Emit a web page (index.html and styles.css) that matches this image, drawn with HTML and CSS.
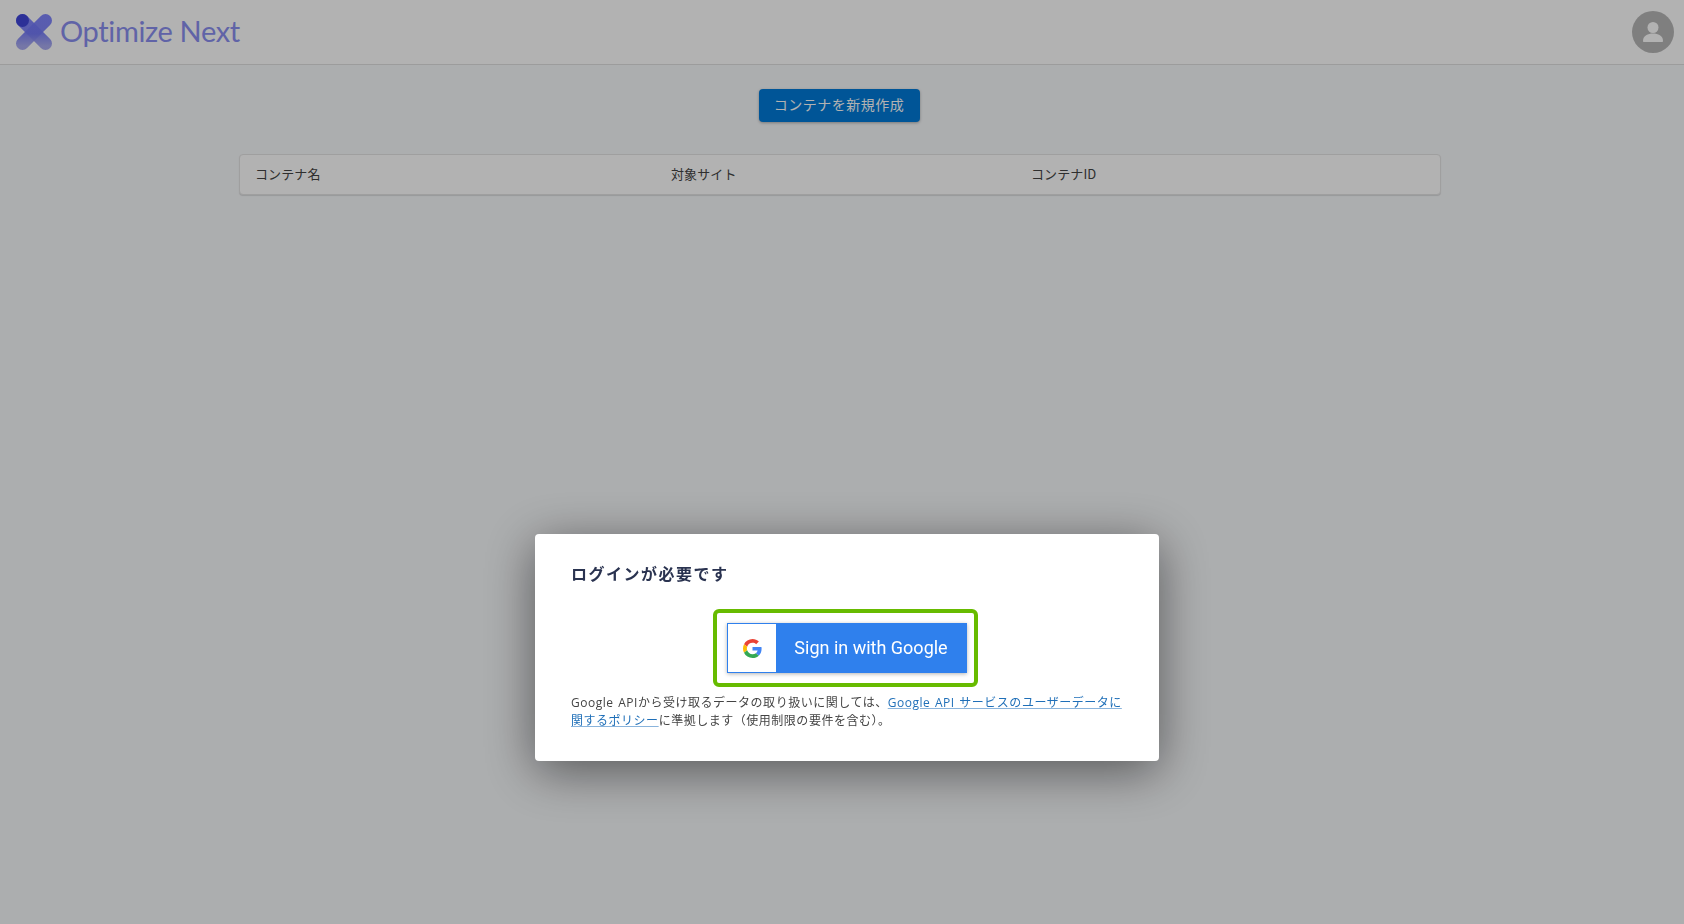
FILE: index.html
```html
<!DOCTYPE html>
<html lang="ja">
<head>
<meta charset="UTF-8">
<meta name="viewport" content="width=device-width, initial-scale=1.0">
<title>Optimize Next</title>
<link rel="stylesheet" href="styles.css">
</head>
<body>

<header class="header">
  <div class="brand">
    <svg class="brand-mark" width="40" height="40" viewBox="0 0 40 40">
      <defs>
        <linearGradient id="markFade" gradientUnits="userSpaceOnUse" x1="0" y1="10" x2="0" y2="34">
          <stop offset="0" stop-color="#7278fb"/>
          <stop offset="0.5" stop-color="#7278f5"/>
          <stop offset="1" stop-color="#9fa1ee"/>
        </linearGradient>
      </defs>
      <path class="mark-stroke" d="M8.5 8.5 L31.5 31.5"/>
      <path class="mark-stroke" d="M31.5 8.5 L8.5 31.5"/>
      <circle class="mark-dot" cx="8.5" cy="8.5" r="6.5"/>
    </svg>
    <span class="brand-name">Optimize Next</span>
  </div>
  <div class="avatar">
    <svg width="42" height="42" viewBox="0 0 42 42">
      <circle cx="21" cy="16.5" r="5.5" fill="#fff"/>
      <path d="M11 30 C11 24.5 16 22.6 21 22.6 C26 22.6 31 24.5 31 30 C31 30.6 30.6 31 30 31 H12 C11.4 31 11 30.6 11 30 Z" fill="#fff"/>
    </svg>
  </div>
</header>

<main class="main">
  <button class="create-btn" type="button">コンテナを新規作成</button>
  <div class="table-card">
    <span class="col col-name">コンテナ名</span>
    <span class="col col-site">対象サイト</span>
    <span class="col col-id">コンテナID</span>
  </div>
</main>

<div class="overlay">
  <div class="modal">
    <h2 class="modal-title">ログインが必要です</h2>
    <div class="signin-frame">
      <a class="google-btn" href="#">
        <span class="google-icon">
          <svg width="19" height="19" viewBox="0 0 48 48">
            <path fill="#EA4335" d="M24 9.5c3.54 0 6.71 1.22 9.21 3.6l6.85-6.85C35.9 2.38 30.47 0 24 0 14.62 0 6.51 5.38 2.56 13.22l7.98 6.19C12.43 13.72 17.74 9.5 24 9.5z"/>
            <path fill="#4285F4" d="M46.98 24.55c0-1.57-.15-3.09-.38-4.55H24v9.02h12.94c-.58 2.96-2.26 5.48-4.78 7.18l7.73 6c4.51-4.18 7.09-10.36 7.09-17.65z"/>
            <path fill="#FBBC05" d="M10.53 28.59c-.48-1.45-.76-2.99-.76-4.59s.27-3.14.76-4.59l-7.98-6.19C.92 16.46 0 20.12 0 24c0 3.88.92 7.54 2.56 10.78l7.97-6.19z"/>
            <path fill="#34A853" d="M24 48c6.48 0 11.93-2.13 15.89-5.81l-7.73-6c-2.15 1.45-4.92 2.3-8.16 2.3-6.26 0-11.57-4.22-13.47-9.91l-7.98 6.19C6.51 42.62 14.62 48 24 48z"/>
          </svg>
        </span>
        <span class="google-label">Sign in with Google</span>
      </a>
    </div>
    <p class="modal-note">Google APIから受け取るデータの取り扱いに関しては、<a href="#">Google API サービスのユーザーデータに関するポリシー</a>に準拠します（使用制限の要件を含む）。</p>
  </div>
</div>

</body>
</html>
```

FILE: styles.css
```css
* {
  box-sizing: border-box;
}
html, body {
  height: 100%;
}
body {
  margin: 0;
  background-color: #f7f9fb;
  font-family: "Noto Sans CJK JP", "Noto Sans", sans-serif;
  color: #333;
  overflow: hidden;
}
.header {
  display: flex;
  align-items: center;
  justify-content: space-between;
  height: 65px;
  padding: 0 10px 1px 14px;
  background-color: #fff;
  border-bottom: 1px solid #e0e0e0;
}
.brand {
  display: flex;
  align-items: center;
  gap: 6px;
}
.brand-mark {
  flex: none;
}
.mark-stroke {
  fill: none;
  stroke: url(#markFade);
  stroke-opacity: 0.9;
  stroke-width: 13;
  stroke-linecap: round;
}
.mark-dot {
  fill: #3f46d8;
}
.brand-name {
  margin-top: -3px;
  font-family: Lato, sans-serif;
  font-weight: 400;
  font-size: 29px;
  letter-spacing: -0.35px;
  color: #8a8ff0;
}
.avatar {
  display: flex;
  width: 42px;
  height: 42px;
  border-radius: 50%;
  background-color: #b7b7b7;
}
.main {
  display: flex;
  flex-direction: column;
  align-items: center;
  width: 1678px;
  padding-top: 24px;
}
.create-btn {
  height: 33px;
  width: 161px;
  padding: 0 0 4px;
  border: none;
  border-radius: 4px;
  background-color: #007ad8;
  color: #fff;
  font-family: inherit;
  font-size: 14px;
  letter-spacing: 0.5px;
  box-shadow: 0 1px 3px rgba(0, 0, 0, 0.3);
}
.table-card {
  display: grid;
  grid-template-columns: 416px 360px 1fr;
  align-items: center;
  width: 1202px;
  height: 41px;
  margin: 32px 0 0 2px;
  padding: 0 0 3px 15px;
  background-color: #fff;
  border: 1px solid #e4e4e4;
  border-radius: 4px;
  box-shadow: 0 1px 1px rgba(0, 0, 0, 0.12);
}
.col {
  font-size: 13px;
  letter-spacing: 0.1px;
  color: #444;
}
.overlay {
  position: fixed;
  top: 0;
  left: 0;
  right: 0;
  bottom: 0;
  display: flex;
  justify-content: center;
  align-items: flex-start;
  padding: 534px 0 0 10px;
  background-color: rgba(0, 0, 0, 0.3);
}
.modal {
  width: 624px;
  height: 227px;
  padding: 27px 36px 0;
  background-color: #fff;
  border-radius: 4px;
  box-shadow: 0 10px 50px rgba(0, 0, 0, 0.5);
}
.modal-title {
  margin: 0;
  height: 24px;
  font-size: 16px;
  line-height: 24px;
  font-weight: 700;
  letter-spacing: 1.5px;
  color: #2a3350;
}
.signin-frame {
  width: 265px;
  height: 78px;
  margin: 24px 0 0 142px;
  padding: 10px;
  border: 4px solid #67bb00;
  border-radius: 6px;
}
.google-btn {
  display: flex;
  height: 50px;
  width: 240px;
  border: 1px solid #2f80ed;
  background-color: #2f80ed;
  box-shadow: 0 1px 4px rgba(0, 0, 0, 0.3);
  text-decoration: none;
}
.google-icon {
  display: flex;
  align-items: center;
  justify-content: center;
  width: 48px;
  background-color: #fff;
}
.google-label {
  flex: 1;
  font-family: Roboto, sans-serif;
  font-weight: 400;
  font-size: 18px;
  line-height: 47px;
  text-align: center;
  color: #fff;
}
.modal-note {
  margin: 7px 0 0;
  font-family: "Open Sans", "Noto Sans CJK JP", sans-serif;
  font-size: 12px;
  line-height: 18px;
  letter-spacing: 0.52px;
  word-spacing: 1px;
  color: #444;
}
.modal-note a {
  color: #1f6fb8;
  text-decoration: underline;
  text-decoration-color: #8ab4dc;
}
```
